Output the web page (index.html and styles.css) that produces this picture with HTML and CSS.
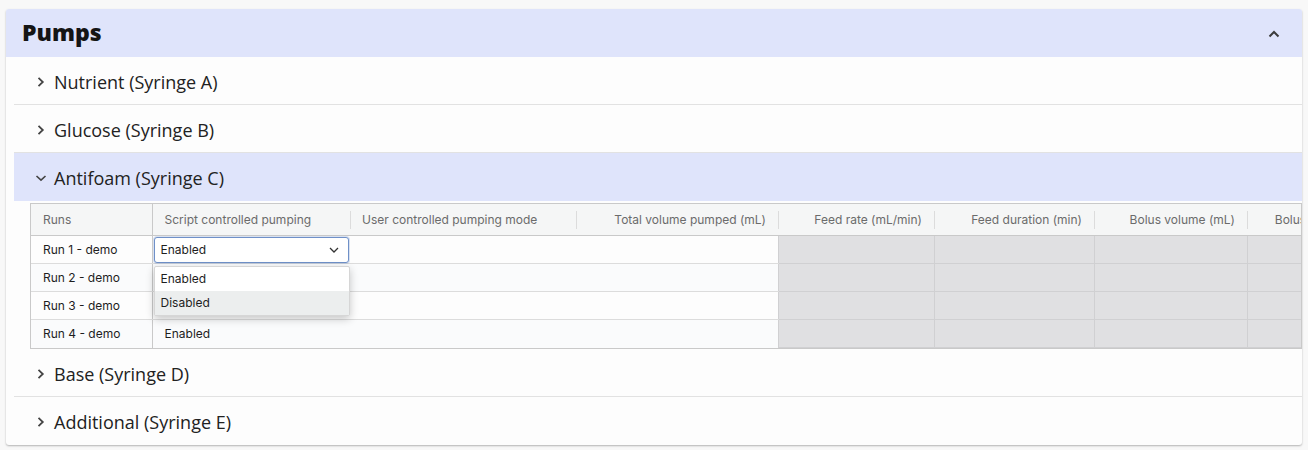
FILE: index.html
```html
<!DOCTYPE html>
<html>

<head>
  <meta charset="utf-8">
  <meta name="viewport" content="width=device-width, initial-scale=1">
  <title>Pumps</title>
  <link rel="stylesheet" href="styles.css">
</head>
<body>
  <section class="card">
    <header class="card-head">
      <h1>Pumps</h1>
      <svg class="chev-up" width="12" height="8" viewBox="0 0 12 8"><path d="M1.5 6.5 6 2l4.5 4.5" fill="none" stroke="#3c3c3c" stroke-width="2"/></svg>
    </header>
    <div class="pumps">
      <div class="pump">
        <svg class="chev" width="10" height="12" viewBox="0 0 10 12"><path d="M2.5 1.8 6.8 6 2.5 10.2" fill="none" stroke="#444" stroke-width="1.8"/></svg>
        <span>Nutrient (Syringe A)</span>
      </div>
      <div class="pump">
        <svg class="chev" width="10" height="12" viewBox="0 0 10 12"><path d="M2.5 1.8 6.8 6 2.5 10.2" fill="none" stroke="#444" stroke-width="1.8"/></svg>
        <span>Glucose (Syringe B)</span>
      </div>
      <div class="pump open">
        <svg class="chev" width="12" height="10" viewBox="0 0 12 10"><path d="M1.5 3 6 7.2 10.5 3" fill="none" stroke="#444" stroke-width="1.6"/></svg>
        <span>Antifoam (Syringe C)</span>
      </div>
      <div class="pump-body">
        <div class="grid-wrap">
          <table class="grid">
            <colgroup>
              <col style="width:121px">
              <col style="width:198px">
              <col style="width:226px">
              <col style="width:202px">
              <col style="width:156px">
              <col style="width:160px">
              <col style="width:153px">
              <col style="width:154px">
            </colgroup>
            <thead>
              <tr>
                <th class="pin">Runs</th>
                <th>Script controlled pumping</th>
                <th class="sep">User controlled pumping mode</th>
                <th class="num sep">Total volume pumped (mL)</th>
                <th class="num sep">Feed rate (mL/min)</th>
                <th class="num sep">Feed duration (min)</th>
                <th class="num sep">Bolus volume (mL)</th>
                <th class="num sep">Bolus duration (min)</th>
              </tr>
            </thead>
            <tbody>
              <tr>
                <td class="pin">Run 1 - demo</td>
                <td class="edit">
                  <div class="select">
                    <span>Enabled</span>
                    <svg width="10" height="6" viewBox="0 0 10 6"><path d="M1 1l4 4 4-4" fill="none" stroke="#333" stroke-width="1.3"/></svg>
                  </div>
                  <ul class="menu">
                    <li>Enabled</li>
                    <li class="hover">Disabled</li>
                  </ul>
                </td>
                <td></td><td></td>
                <td class="off"></td><td class="off"></td><td class="off"></td><td class="off"></td>
              </tr>
              <tr>
                <td class="pin">Run 2 - demo</td>
                <td></td><td></td><td></td>
                <td class="off"></td><td class="off"></td><td class="off"></td><td class="off"></td>
              </tr>
              <tr>
                <td class="pin">Run 3 - demo</td>
                <td></td><td></td><td></td>
                <td class="off"></td><td class="off"></td><td class="off"></td><td class="off"></td>
              </tr>
              <tr>
                <td class="pin">Run 4 - demo</td>
                <td class="val">Enabled</td><td></td><td></td>
                <td class="off"></td><td class="off"></td><td class="off"></td><td class="off"></td>
              </tr>
            </tbody>
          </table>
        </div>
      </div>
      <div class="pump">
        <svg class="chev" width="10" height="12" viewBox="0 0 10 12"><path d="M2.5 1.8 6.8 6 2.5 10.2" fill="none" stroke="#444" stroke-width="1.8"/></svg>
        <span>Base (Syringe D)</span>
      </div>
      <div class="pump last">
        <svg class="chev" width="10" height="12" viewBox="0 0 10 12"><path d="M2.5 1.8 6.8 6 2.5 10.2" fill="none" stroke="#444" stroke-width="1.8"/></svg>
        <span>Additional (Syringe E)</span>
      </div>
    </div>
  </section>
</body>
</html>
```

FILE: styles.css
```css
body {
  margin: 0;
  padding: 9px 6px;
  background: #f8f8f8;
  font-family: "Open Sans", sans-serif;
  color: #222;
}

.card {
  width: 1296px;
  background: #fdfdfd;
  border-radius: 3px;
  box-shadow: 0 1px 2px rgba(0, 0, 0, 0.28);
  overflow: hidden;
}

.card-head {
  height: 48px;
  display: flex;
  align-items: center;
  justify-content: space-between;
  padding: 0 22px 0 16px;
  background: #dfe4fb;
}

.card-head h1 {
  margin: -3px 0 0;
  font-size: 23px;
  font-weight: 800;
  color: #151515;
}

.chev-up {
  margin-top: 1px;
}

.pumps {
  padding-left: 8px;
}

.pump {
  box-sizing: border-box;
  height: 48px;
  display: flex;
  align-items: center;
  gap: 8px;
  padding-left: 22px;
  font-size: 18px;
  border-bottom: 1px solid #e2e2e2;
}

.pump span {
  margin-top: 2px;
}

.pump .chev {
  margin-top: 2px;
}

.pump.open {
  background: #dfe4fb;
  border-bottom: none;
}

.pump.open .chev {
  margin-left: -1px;
  margin-right: -1px;
}

.pump.last {
  border-bottom: none;
}

/* the grid's own bottom border doubles as the row separator */
.pump-body {
  padding: 2px 0 0 16px;
}

.grid-wrap {
  overflow: hidden;
  border: 1px solid #c9c9c9;
}

.grid {
  table-layout: fixed;
  border-collapse: collapse;
  width: 1370px;
  font-family: Inter, "Liberation Sans", sans-serif;
  font-size: 12px;
  color: #1e1e1e;
}

.grid th {
  height: 31px;
  padding: 0 12px;
  font-weight: 400;
  color: #6b6b6b;
  text-align: left;
  background: #f5f6f6;
  border-bottom: 1px solid #c9c9c9;
  white-space: nowrap;
  overflow: hidden;
  position: relative;
}

.grid th.num {
  text-align: right;
}

.grid th.sep::before {
  content: "";
  position: absolute;
  left: 0;
  top: 7px;
  height: 18px;
  border-left: 1px solid #dcdcdc;
}

.grid td {
  height: 27px;
  padding: 0 12px;
  border-bottom: 1px solid #dcdcdc;
  white-space: nowrap;
}

.grid tbody tr:nth-child(even) td {
  background: #fafbfc;
}

.grid tbody tr:last-child td {
  border-bottom: none;
}

.grid .pin {
  border-right: 1px solid #c9c9c9;
}

.grid td.off,
.grid tbody tr:nth-child(even) td.off {
  background: #e0e0e2;
  border: 1px solid #d0d0d2;
  border-top: none;
}

.grid td.edit {
  position: relative;
  padding: 0 1px;
}

.select {
  height: 24px;
  display: flex;
  align-items: center;
  justify-content: space-between;
  padding: 0 9px 0 6px;
  border: 1px solid #6f90c8;
  border-radius: 3px;
  background: #fff;
  box-shadow: 0 0 0 1px rgba(111, 144, 200, 0.25);
}

.menu {
  position: absolute;
  left: 1px;
  top: 30px;
  width: 194px;
  margin: 0;
  padding: 0;
  list-style: none;
  background: #fff;
  border: 1px solid #d6d6d6;
  border-radius: 2px;
  box-shadow: 0 3px 8px rgba(0, 0, 0, 0.22);
  z-index: 2;
}

.menu li {
  height: 24px;
  line-height: 24px;
  padding-left: 6px;
}

.menu li.hover {
  background: #eceeee;
}
```
